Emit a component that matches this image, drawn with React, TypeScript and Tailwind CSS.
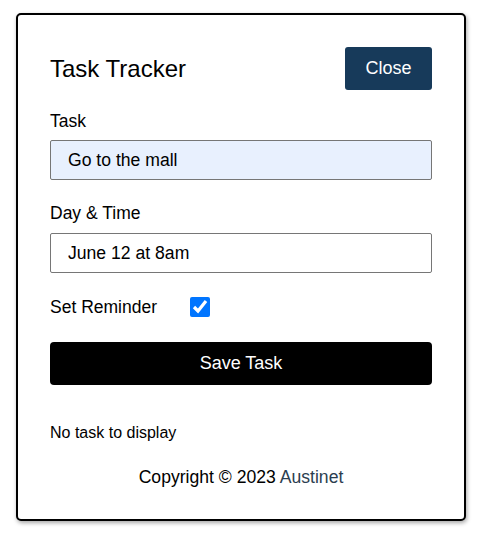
import { useState } from 'react';

export default function App() {
  const [task, setTask] = useState('Go to the mall');
  const [day, setDay] = useState('June 12 at 8am');
  const [reminder, setReminder] = useState(true);

  return (
    <div className="min-h-screen bg-white pt-[13px] pl-4 font-['Liberation_Sans',Arial,sans-serif] text-black">
      <div className="w-[450px] rounded-[5px] border-2 border-black bg-white px-8 pt-8 pb-[31px] shadow-[1px_2px_4px_rgba(0,0,0,0.35)]">
        <header className="flex items-center justify-between">
          <h1 className="text-[24px] font-normal leading-none">Task Tracker</h1>
          <button className="h-[43px] w-[87px] rounded-[3px] bg-[#173a5a] text-[18px] text-white">
            Close
          </button>
        </header>

        <form className="mt-[21px]" onSubmit={(e) => e.preventDefault()}>
          <label className="block text-[17.5px] leading-5">Task</label>
          <input
            value={task}
            onChange={(e) => setTask(e.target.value)}
            className="mt-[9px] block h-10 w-full rounded-[2px] border border-[#767676] bg-[#e8f0fe] px-[17px] text-[17.6px] outline-none"
          />

          <label className="mt-[23px] block text-[17.5px] leading-5">Day &amp; Time</label>
          <input
            value={day}
            onChange={(e) => setDay(e.target.value)}
            className="mt-[10px] block h-10 w-full rounded-[2px] border border-[#767676] bg-white px-[17px] text-[17.6px] outline-none"
          />

          <div className="mt-6 flex h-5 items-center">
            <label className="w-[140px] text-[17.5px] leading-5">Set Reminder</label>
            <input
              type="checkbox"
              checked={reminder}
              onChange={(e) => setReminder(e.target.checked)}
              className="h-5 w-5 accent-[#0075ff]"
            />
          </div>

          <button className="mt-[25px] block h-[43px] w-full rounded-[4px] bg-black text-[18px] text-white">
            Save Task
          </button>
        </form>

        <p className="mt-[38px] text-[16px] leading-5">No task to display</p>

        <footer className="mt-[23px] text-center text-[17.6px] leading-[22px]">
          Copyright © 2023 <span className="text-[#2c3e50]">Austinet</span>
        </footer>
      </div>
    </div>
  );
}
